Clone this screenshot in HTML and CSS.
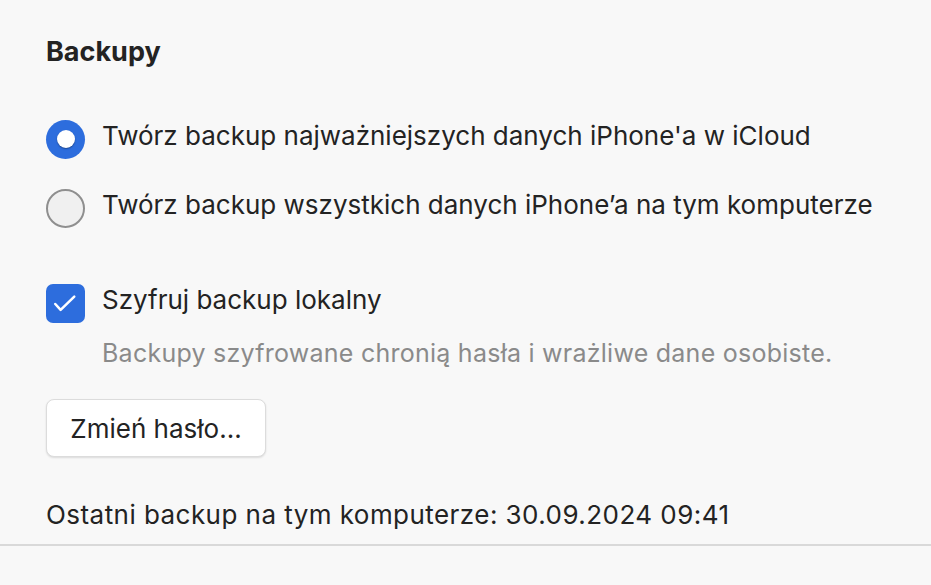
FILE: index.html
```html
<!DOCTYPE html>
<html lang="pl">
<head>
<meta charset="utf-8">
<title>Backupy</title>
<link rel="stylesheet" href="styles.css">
</head>
<body>
<section class="panel">
  <h2 class="title">Backupy</h2>
  <div class="option option-first">
    <span class="radio radio-on"><span class="radio-dot"></span></span>
    <span class="label">Twórz backup najważniejszych danych iPhone'a w iCloud</span>
  </div>
  <div class="option option-second">
    <span class="radio radio-off"></span>
    <span class="label">Twórz backup wszystkich danych iPhone’a na tym komputerze</span>
  </div>
  <div class="option option-check">
    <span class="checkbox">
      <svg viewBox="0 0 40 40" width="40" height="40"><path d="M9.5 20.5 L15 26.5 L29 13" fill="none" stroke="#fff" stroke-width="2.6" stroke-linecap="round" stroke-linejoin="round"/></svg>
    </span>
    <span class="label">Szyfruj backup lokalny</span>
  </div>
  <p class="desc">Backupy szyfrowane chronią hasła i wrażliwe dane osobiste.</p>
  <button class="btn" type="button">Zmień hasło...</button>
  <p class="last">Ostatni backup na tym komputerze: 30.09.2024 09:41</p>
</section>
<hr class="divider">
</body>
</html>
```

FILE: styles.css
```css
html, body {
  margin: 0;
  padding: 0;
  background: #f8f8f8;
}
body {
  font-family: Inter, "Noto Sans", "Liberation Sans", sans-serif;
  color: #232323;
  height: 585px;
  overflow: hidden;
}
.panel {
  padding: 38px 46px 0 46px;
  display: flex;
  flex-direction: column;
  align-items: flex-start;
}
.title {
  margin: 0;
  font-size: 27px;
  font-weight: 700;
  line-height: 28px;
  color: #232323;
}
.option {
  display: flex;
  align-items: center;
  gap: 17px;
  height: 40px;
}
.option-first { margin-top: 53px; }
.option-second { margin-top: 29px; }
.option-check { margin-top: 55px; }
.label {
  font-size: 26px;
  line-height: 40px;
  margin-bottom: 6px;
  white-space: nowrap;
}
.radio {
  box-sizing: border-box;
  width: 39px;
  height: 39px;
  border-radius: 50%;
  display: flex;
  align-items: center;
  justify-content: center;
  flex: none;
}
.radio-on {
  background: #2d6ddd;
}
.radio-dot {
  width: 18px;
  height: 18px;
  border-radius: 50%;
  background: #fff;
  box-shadow: 0 1px 1.5px rgba(0,0,0,0.35);
}
.radio-off {
  background: #f0f0f0;
  border: 2px solid #8f8f8f;
}
.checkbox {
  width: 39px;
  height: 39px;
  border-radius: 7px;
  background: #2d6ddd;
  display: flex;
  flex: none;
}
.checkbox svg {
  width: 39px;
  height: 39px;
}
.desc {
  margin: 15px 0 0 56px;
  font-size: 25px;
  letter-spacing: 0.25px;
  line-height: 30px;
  color: #8a8a8a;
  white-space: nowrap;
}
.btn {
  margin-top: 31px;
  width: 220px;
  height: 58px;
  box-sizing: border-box;
  background: #fff;
  border: 1px solid #dcdcdc;
  border-radius: 8px;
  box-shadow: 0 1px 2px rgba(0,0,0,0.12);
  font-family: inherit;
  font-size: 26px;
  color: #232323;
  padding: 0;
}
.last {
  margin: 43px 0 0 0;
  font-size: 26px;
  letter-spacing: 0.45px;
  line-height: 30px;
  white-space: nowrap;
}
.divider {
  margin: 14px 0 0 0;
  border: 0;
  height: 2px;
  background: #d9d9d9;
}
```
